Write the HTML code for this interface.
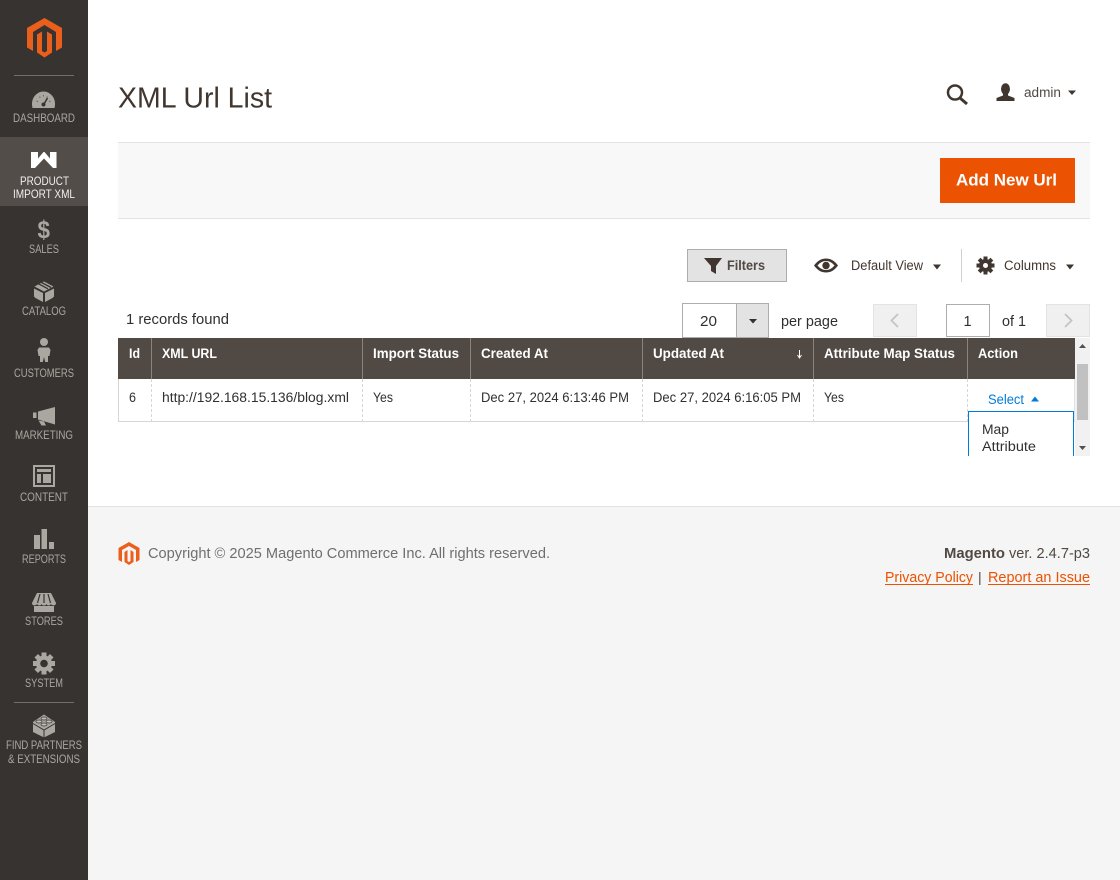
<!DOCTYPE html>
<html lang="en">
<head>
<meta charset="utf-8">
<title>XML Url List</title>
<style>
html,body{margin:0;padding:0;width:1120px;height:880px;overflow:hidden;background:#fff}
svg{display:block}
text{font-family:"Liberation Sans",Arial,sans-serif;white-space:pre}
.nav{font-size:12px;fill:#aaa6a0}
.ic{fill:#aaa6a0}
.th{font-size:13.500px;font-weight:bold;fill:#fff}
.td{font-size:13.500px;fill:#303030}
.t{font-size:14.500px;fill:#303030}
.ft{font-size:14.500px;fill:#6f6f6f}
.ln{font-size:14.500px;fill:#eb5202}
</style>
</head>
<body>
<svg xmlns="http://www.w3.org/2000/svg" width="1120" height="880" viewBox="0 0 1120 880">
<!-- backgrounds -->
<rect width="1120" height="880" fill="#fff"/>
<rect x="88" y="506" width="1032" height="374" fill="#f5f5f5"/>
<rect x="88" y="506" width="1032" height="1" fill="#e3e3e3"/>
<!-- sidebar -->
<rect width="88" height="880" fill="#373330"/>
<rect y="137" width="88" height="69" fill="#524d49"/>
<rect x="14" y="75" width="60" height="1" fill="#736e69"/>
<rect x="14" y="702" width="60" height="1" fill="#736e69"/>
<path fill="#eb5f1c" d="M44.500 18L62 28V47.500L56 51V32L44.500 25L33 32V51L27 47.500V28Z"/>
<path fill="#eb5f1c" d="M37 34.500L42 31.500V51L44.500 52.500L47 51V31.500L52 34.500V52.500L44.500 57.500L37 52.500Z"/>

<path class="ic" d="M32.500 108C30 98 37 91.500 43.500 91.500C50 91.500 57 98 54.500 108Z"/>
<path stroke="#6b6762" stroke-width="1" fill="none" d="M36.500 101l1.500 .8M39.500 96.500l.8 1.200M43.500 95v1.500M47.500 96.500l-.8 1.200M50.500 101l-1.500 .8"/>
<path stroke="#373330" stroke-width="1.500" d="M47.500 98l-3.500 6"/>
<circle cx="43.500" cy="104.500" r="2" fill="#373330"/>
<text class="nav" x="13" y="122" textLength="62" lengthAdjust="spacingAndGlyphs">DASHBOARD</text>

<path fill="#fff" d="M31 152H38V158.500L43.500 152H44.500L50 158.500V152H56.500V168H53L44 158.500L35 168H31Z"/>
<text class="nav" x="20" y="185" textLength="49" lengthAdjust="spacingAndGlyphs" style="fill:#f0eeec">PRODUCT</text>
<text class="nav" x="13" y="198" textLength="62" lengthAdjust="spacingAndGlyphs" style="fill:#f0eeec">IMPORT XML</text>

<text x="37.500" y="238" font-size="25" font-weight="bold" class="ic" textLength="12.500" lengthAdjust="spacingAndGlyphs">$</text>
<text class="nav" x="29" y="253" textLength="30" lengthAdjust="spacingAndGlyphs">SALES</text>

<path class="ic" d="M34.500 286.500L44 281.500L53.500 286.500L44 291.500Z"/>
<path class="ic" d="M34 288.500L43 293V302L35.500 298L34 296.500ZM54 288.500L45 293V302L52.500 298L54 296.500Z"/>
<path stroke="#373330" stroke-width="1.300" d="M38.500 283.800L48 288.800M41.500 282.500L51 287.500"/>
<text class="nav" x="22" y="315" textLength="44" lengthAdjust="spacingAndGlyphs">CATALOG</text>

<circle cx="44" cy="342" r="4" class="ic"/>
<path class="ic" d="M39 347.500H49L50.500 350L49.500 356H48V362H45.200L44 357L42.800 362H40V356H38.500L37.500 350Z"/>
<text class="nav" x="14" y="377" textLength="60" lengthAdjust="spacingAndGlyphs">CUSTOMERS</text>

<path class="ic" d="M33 412.500H36.500V418H33ZM38 411.500L55 407V424.500L38 419.500ZM38.500 420.500L44 421.500L46 425.500L41.500 425.500Z"/>
<text class="nav" x="15" y="439" textLength="58" lengthAdjust="spacingAndGlyphs">MARKETING</text>

<path class="ic" fill-rule="evenodd" d="M33 465H55V487H33ZM35 467V485H53V467ZM37 469H51V472H37ZM37 474H41V483H37ZM43 474H51V483H43Z"/>
<text class="nav" x="20" y="501" textLength="48" lengthAdjust="spacingAndGlyphs">CONTENT</text>

<path class="ic" d="M34 535H40V549H34ZM41.500 529H47V549H41.500ZM49 542H54V549H49Z"/>
<text class="nav" x="22" y="563" textLength="44" lengthAdjust="spacingAndGlyphs">REPORTS</text>

<path class="ic" d="M37 593H51L56 603C56 606 52 606 51 604C50 606 47 606 46.500 604C46 606 42 606 41.500 604C41 606 38 606 37 604C36 606 32 606 32 603Z"/>
<path class="ic" d="M34 606H54V612H34Z"/>
<path stroke="#373330" stroke-width="1.200" d="M40 594L37.500 603M44 594V603M48 594L50.500 603"/>
<text class="nav" x="25" y="625" textLength="38" lengthAdjust="spacingAndGlyphs">STORES</text>

<circle cx="44" cy="663.500" r="8" class="ic"/>
<g class="ic"><rect x="41.500" y="652.500" width="5" height="22"/><rect x="41.500" y="652.500" width="5" height="22" transform="rotate(45 44 663.500)"/><rect x="41.500" y="652.500" width="5" height="22" transform="rotate(90 44 663.500)"/><rect x="41.500" y="652.500" width="5" height="22" transform="rotate(135 44 663.500)"/></g>
<circle cx="44" cy="663.500" r="3.800" fill="#373330"/>
<text class="nav" x="25" y="687" textLength="38" lengthAdjust="spacingAndGlyphs">SYSTEM</text>

<path class="ic" d="M33 722L44 714.500L55 722V732L44 737.500L33 732Z"/>
<path fill="none" stroke="#373330" stroke-width="1" d="M33 723.500L44 730L55 723.500M44 730V737.500"/>
<ellipse cx="39" cy="721.500" rx="3" ry="1.500" fill="#c2bfba" stroke="#373330" stroke-width=".8"/>
<ellipse cx="49" cy="721.500" rx="3" ry="1.500" fill="#c2bfba" stroke="#373330" stroke-width=".8"/>
<ellipse cx="44" cy="718.500" rx="3" ry="1.500" fill="#c2bfba" stroke="#373330" stroke-width=".8"/>
<ellipse cx="44" cy="724.500" rx="3" ry="1.500" fill="#c2bfba" stroke="#373330" stroke-width=".8"/>
<text class="nav" x="6" y="749" textLength="76" lengthAdjust="spacingAndGlyphs">FIND PARTNERS</text>
<text class="nav" x="8" y="763" textLength="72" lengthAdjust="spacingAndGlyphs">&amp; EXTENSIONS</text>

<!-- header -->
<text x="118" y="107.500" font-size="28.500" fill="#41362f" textLength="154" lengthAdjust="spacingAndGlyphs">XML Url List</text>
<circle cx="955" cy="92.500" r="7" fill="none" stroke="#41362f" stroke-width="2.500"/>
<path d="M960 98L967 104" stroke="#41362f" stroke-width="3"/>
<ellipse cx="1005.500" cy="89" rx="4.500" ry="5.800" fill="#41362f"/>
<path fill="#41362f" d="M1003 93H1008V95.500L1014.500 98V101H996.500V98L1003 95.500Z"/>
<text x="1024" y="97" font-size="13.500" fill="#514943" textLength="37" lengthAdjust="spacingAndGlyphs">admin</text>
<path d="M1068 90.500H1076L1072 95Z" fill="#41362f"/>

<!-- actions bar -->
<rect x="118" y="142" width="972" height="77" fill="#f8f8f8"/>
<rect x="118" y="142" width="972" height="1" fill="#e3e3e3"/>
<rect x="118" y="218" width="972" height="1" fill="#e3e3e3"/>
<rect x="940" y="158" width="135" height="45" fill="#eb5202"/>
<text x="956" y="185.500" font-size="16.500" font-weight="bold" fill="#fff" textLength="101" lengthAdjust="spacingAndGlyphs">Add New Url</text>

<!-- toolbar -->
<rect x="687.500" y="249.500" width="99" height="32" fill="#e3e3e3" stroke="#adadad"/>
<path fill="#41362f" d="M704 258H722L716 266V274L711 271V266Z"/>
<text x="727" y="270" font-size="13.500" font-weight="bold" fill="#514943" textLength="38" lengthAdjust="spacingAndGlyphs">Filters</text>
<path fill-rule="evenodd" fill="#41362f" d="M814 265.500C818 260 822 258.500 826 258.500C830 258.500 834 260 838 265.500C834 271 830 272.500 826 272.500C822 272.500 818 271 814 265.500ZM817.500 265.500C820 268.500 823 270 826 270C829 270 832 268.500 834.500 265.500C832 262.500 829 261 826 261C823 261 820 262.500 817.500 265.500Z"/>
<circle cx="826" cy="265.500" r="3.700" fill="#41362f"/>
<text x="851" y="270" font-size="13.500" fill="#41362f" textLength="72" lengthAdjust="spacingAndGlyphs">Default View</text>
<path d="M933 264.500H941L937 269.500Z" fill="#41362f"/>
<rect x="961" y="249" width="1" height="33" fill="#d1d1d1"/>
<circle cx="985.500" cy="265.500" r="6.500" fill="#41362f"/>
<g fill="#41362f"><rect x="983.500" y="256.500" width="4" height="18"/><rect x="983.500" y="256.500" width="4" height="18" transform="rotate(45 985.500 265.500)"/><rect x="983.500" y="256.500" width="4" height="18" transform="rotate(90 985.500 265.500)"/><rect x="983.500" y="256.500" width="4" height="18" transform="rotate(135 985.500 265.500)"/></g>
<circle cx="985.500" cy="265.500" r="2.500" fill="#fff"/>
<text x="1004" y="270" font-size="13.500" fill="#41362f" textLength="52" lengthAdjust="spacingAndGlyphs">Columns</text>
<path d="M1066 264.500H1074L1070 269.500Z" fill="#41362f"/>

<!-- pager -->
<text class="t" x="126" y="324" textLength="103" lengthAdjust="spacingAndGlyphs">1 records found</text>
<rect x="682.500" y="303.500" width="54" height="34" fill="#fff" stroke="#adadad"/>
<rect x="736.500" y="303.500" width="32" height="34" fill="#e3e3e3" stroke="#adadad"/>
<text class="t" x="700" y="326" textLength="17" lengthAdjust="spacingAndGlyphs">20</text>
<path d="M749 319H757L753 323.500Z" fill="#303030"/>
<text class="t" x="781" y="326" textLength="57" lengthAdjust="spacingAndGlyphs">per page</text>
<rect x="873.500" y="304.500" width="43" height="32" fill="#f0f0f0" stroke="#e3e3e3"/>
<path d="M898 314L891.500 320.500L898 327" fill="none" stroke="#c4c4c4" stroke-width="1.800"/>
<rect x="946.500" y="304.500" width="43" height="32" fill="#fff" stroke="#adadad"/>
<text class="t" x="963.500" y="326">1</text>
<text class="t" x="1002" y="326" textLength="24" lengthAdjust="spacingAndGlyphs">of 1</text>
<rect x="1046.500" y="304.500" width="43" height="32" fill="#f0f0f0" stroke="#e3e3e3"/>
<path d="M1065 314L1071.500 320.500L1065 327" fill="none" stroke="#c4c4c4" stroke-width="1.800"/>

<!-- table -->
<rect x="118" y="338" width="957" height="41" fill="#514943"/>
<g fill="#8a837e">
<rect x="151" y="338" width="1" height="41"/><rect x="362" y="338" width="1" height="41"/><rect x="470" y="338" width="1" height="41"/><rect x="642" y="338" width="1" height="41"/><rect x="813" y="338" width="1" height="41"/><rect x="967" y="338" width="1" height="41"/>
</g>
<text class="th" x="129" y="358" textLength="11" lengthAdjust="spacingAndGlyphs">Id</text>
<text class="th" x="162" y="358" textLength="55" lengthAdjust="spacingAndGlyphs">XML URL</text>
<text class="th" x="373" y="358" textLength="86" lengthAdjust="spacingAndGlyphs">Import Status</text>
<text class="th" x="481" y="358" textLength="67" lengthAdjust="spacingAndGlyphs">Created At</text>
<text class="th" x="653" y="358" textLength="71" lengthAdjust="spacingAndGlyphs">Updated At</text>
<path d="M799.500 350V357M797.500 355L799.500 358L801.500 355" fill="none" stroke="#fff"/>
<text class="th" x="824" y="358" textLength="131" lengthAdjust="spacingAndGlyphs">Attribute Map Status</text>
<text class="th" x="978" y="358" textLength="40" lengthAdjust="spacingAndGlyphs">Action</text>

<rect x="118.500" y="379" width="956" height="42" fill="#fff"/>
<path d="M118.500 379V421.500H1075" fill="none" stroke="#d6d6d6"/>
<path d="M1074.500 379V421.500" stroke="#e3e3e3"/>
<path d="M151.500 379V421M362.500 379V421M470.500 379V421M642.500 379V421M813.500 379V421M967.500 379V421" stroke="#d6d6d6" stroke-dasharray="3 2"/>
<text class="td" x="129" y="402" textLength="7" lengthAdjust="spacingAndGlyphs">6</text>
<text class="td" x="162" y="402" textLength="187" lengthAdjust="spacingAndGlyphs">http://192.168.15.136/blog.xml</text>
<text class="td" x="373" y="402" textLength="20" lengthAdjust="spacingAndGlyphs">Yes</text>
<text class="td" x="481" y="402" textLength="148" lengthAdjust="spacingAndGlyphs">Dec 27, 2024 6:13:46 PM</text>
<text class="td" x="653" y="402" textLength="148" lengthAdjust="spacingAndGlyphs">Dec 27, 2024 6:16:05 PM</text>
<text class="td" x="824" y="402" textLength="20" lengthAdjust="spacingAndGlyphs">Yes</text>
<text x="988" y="404" font-size="13.500" fill="#007bdb" textLength="36" lengthAdjust="spacingAndGlyphs">Select</text>
<path d="M1031 401.500H1039L1035 396.500Z" fill="#007bdb"/>

<!-- dropdown clipped -->
<path d="M968.500 456V411.500H1073.500V456" fill="#fff" stroke="#007bdb" stroke-width="1"/>
<text class="td" x="982" y="434" textLength="27" lengthAdjust="spacingAndGlyphs">Map</text>
<text class="td" x="982" y="451" textLength="54" lengthAdjust="spacingAndGlyphs">Attribute</text>

<!-- scrollbar -->
<rect x="1075" y="338" width="15" height="118" fill="#f1f1f1"/>
<rect x="1077" y="364" width="11" height="56" fill="#c1c1c1"/>
<path d="M1079 348H1086L1082.500 344Z" fill="#505050"/>
<path d="M1079 446H1086L1082.500 450Z" fill="#505050"/>

<!-- footer -->
<path fill="#eb5f1c" d="M129 542L139.500 548V560L136 562V550L129 546L122 550V562L118.500 560V548Z"/>
<path fill="#eb5f1c" d="M124.500 552L127.500 550V561L129 562L130.500 561V550L133.500 552V562L129 565L124.500 562Z"/>
<text class="ft" x="148" y="558" textLength="402" lengthAdjust="spacingAndGlyphs">Copyright © 2025 Magento Commerce Inc. All rights reserved.</text>
<text x="944" y="558" font-size="14.500" font-weight="bold" fill="#514943" textLength="61" lengthAdjust="spacingAndGlyphs">Magento</text>
<text x="1009" y="558" font-size="14.500" fill="#514943" textLength="81" lengthAdjust="spacingAndGlyphs">ver. 2.4.7-p3</text>
<text class="ln" x="885" y="582" textLength="88" lengthAdjust="spacingAndGlyphs">Privacy Policy</text>
<rect x="885" y="584" width="88" height="1" fill="#eb5202"/>
<text x="978" y="582" font-size="14" fill="#514943">|</text>
<text class="ln" x="988" y="582" textLength="102" lengthAdjust="spacingAndGlyphs">Report an Issue</text>
<rect x="988" y="584" width="102" height="1" fill="#eb5202"/>
</svg>
</body>
</html>
